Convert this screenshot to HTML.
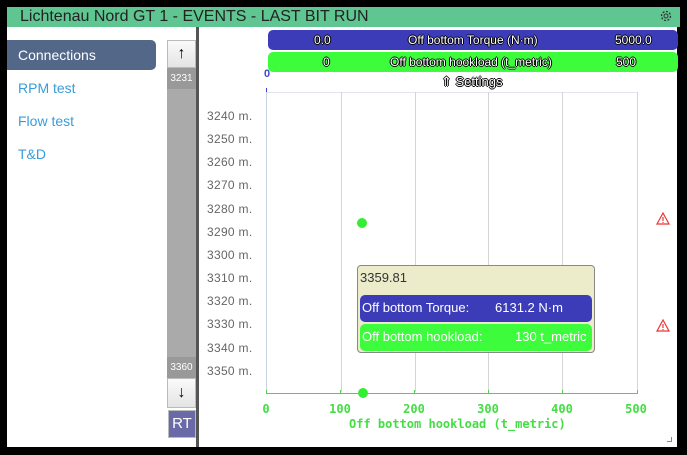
<!DOCTYPE html>
<html><head><style>
*{margin:0;padding:0;box-sizing:border-box}
body{width:687px;height:455px;background:#000;position:relative;overflow:hidden;font-family:"Liberation Sans",sans-serif}
.a{position:absolute}
.lbl{position:absolute;left:207px;font-size:12px;color:#666;letter-spacing:0.3px}
.g{position:absolute;top:92px;width:1px;height:300px;background:#d4d4d4}
.xt{position:absolute;top:402px;font-size:12px;font-weight:bold;color:#44dd44;font-family:"DejaVu Sans Mono",monospace;transform:translateX(-50%)}
.o{text-shadow:1px 0 0 #000,-1px 0 0 #000,0 1px 0 #000,0 -1px 0 #000}
</style></head><body>
<div class="a" style="left:7px;top:7px;width:673px;height:20px;background:#5fc591"></div>
<div class="a" style="left:20px;top:7px;font-size:16px;color:#222;line-height:20px">Lichtenau Nord GT 1 - EVENTS - LAST BIT RUN</div>
<svg class="a" style="left:659px;top:9px" width="14" height="14" viewBox="0 0 14 14"><circle cx="7" cy="7" r="4.5" fill="none" stroke="#333" stroke-width="1.3" stroke-dasharray="2 1.5"/><circle cx="7" cy="7" r="2" fill="none" stroke="#333"/></svg>
<div class="a" style="left:7px;top:27px;width:670px;height:420px;background:#fff"></div>
<div class="a" style="left:7px;top:40px;width:149px;height:30px;background:#536788;border-radius:0 5px 5px 0;color:#fff;font-size:14px;line-height:30px;padding-left:11px">Connections</div>
<div class="a" style="left:18px;top:80px;font-size:14px;color:#3a9dd8">RPM test</div>
<div class="a" style="left:18px;top:113px;font-size:14px;color:#3a9dd8">Flow test</div>
<div class="a" style="left:18px;top:146px;font-size:14px;color:#3a9dd8">T&amp;D</div>
<div class="a" style="left:167px;top:40px;width:29px;height:368px;background:#aaa"></div>
<div class="a" style="left:167px;top:40px;width:29px;height:28px;background:linear-gradient(#fafafa,#e4e4e4);border:1px solid #bbb;text-align:center;font-size:16px;line-height:26px">↑</div>
<div class="a" style="left:167px;top:68px;width:29px;height:21px;background:#999;color:#fff;font-size:10px;text-align:center;line-height:21px">3231</div>
<div class="a" style="left:167px;top:357px;width:29px;height:21px;background:#999;color:#fff;font-size:10px;text-align:center;line-height:21px">3360</div>
<div class="a" style="left:167px;top:378px;width:29px;height:30px;background:linear-gradient(#fafafa,#e4e4e4);border:1px solid #bbb;text-align:center;font-size:16px;line-height:28px">↓</div>
<div class="a" style="left:168px;top:410px;width:28px;height:28px;background:#6a6aa8;border:1px solid #bbb;color:#fff;font-size:15px;text-align:center;line-height:26px">RT</div>
<div class="a" style="left:196px;top:27px;width:3px;height:420px;background:#555"></div>
<div class="a o" style="left:268px;top:30px;width:410px;height:20px;background:#3c3cb8;border-radius:5px;color:#fff;font-size:12px;line-height:20px"><span class="a" style="left:46px">0.0</span><span class="a" style="left:140px">Off bottom Torque (N·m)</span><span class="a" style="left:347px">5000.0</span></div>
<div class="a o" style="left:268px;top:52px;width:410px;height:20px;background:#3cfc3c;border-radius:5px;color:#fff;font-size:12px;line-height:20px"><span class="a" style="left:55px">0</span><span class="a" style="left:122px">Off bottom hookload (t_metric)</span><span class="a" style="left:348px">500</span></div>
<div class="a" style="left:264px;top:68px;font-size:11px;color:#4444cc;font-weight:bold">0</div>
<div class="a o" style="left:441px;top:74px;font-size:13px;color:#fff">⇑ Settings</div>
<div class="a" style="left:266px;top:92px;width:372px;height:1px;background:#e4e4f0"></div>
<div class="a" style="left:266px;top:88px;width:1px;height:5px;background:#4444cc"></div>
<div class="g" style="left:266px;background:#c8d4e4"></div><div class="g" style="left:341px"></div><div class="g" style="left:415px"></div><div class="g" style="left:488px"></div><div class="g" style="left:562px"></div><div class="g" style="left:637px"></div>
<div class="lbl" style="top:109px">3240 m.</div><div class="lbl" style="top:132px">3250 m.</div><div class="lbl" style="top:155px">3260 m.</div><div class="lbl" style="top:178px">3270 m.</div><div class="lbl" style="top:202px">3280 m.</div><div class="lbl" style="top:225px">3290 m.</div><div class="lbl" style="top:248px">3300 m.</div><div class="lbl" style="top:271px">3310 m.</div><div class="lbl" style="top:294px">3320 m.</div><div class="lbl" style="top:317px">3330 m.</div><div class="lbl" style="top:341px">3340 m.</div><div class="lbl" style="top:364px">3350 m.</div>
<div class="a" style="left:266px;top:393px;width:372px;height:1px;background:#55cc55"></div>
<div class="a" style="left:266px;top:390px;width:1px;height:4px;background:#55cc55"></div><div class="a" style="left:340px;top:390px;width:1px;height:4px;background:#55cc55"></div><div class="a" style="left:414px;top:390px;width:1px;height:4px;background:#55cc55"></div><div class="a" style="left:488px;top:390px;width:1px;height:4px;background:#55cc55"></div><div class="a" style="left:562px;top:390px;width:1px;height:4px;background:#55cc55"></div><div class="a" style="left:637px;top:390px;width:1px;height:4px;background:#55cc55"></div>
<div class="xt" style="left:266px">0</div><div class="xt" style="left:340px">100</div><div class="xt" style="left:414px">200</div><div class="xt" style="left:488px">300</div><div class="xt" style="left:562px">400</div><div class="xt" style="left:636px">500</div>
<div class="a" style="left:349px;top:417px;font-size:12px;font-weight:bold;color:#44dd44;font-family:'DejaVu Sans Mono',monospace">Off bottom hookload (t_metric)</div>
<div class="a" style="left:357px;top:218px;width:10px;height:10px;border-radius:50%;background:#33ee33"></div>
<div class="a" style="left:358px;top:388px;width:10px;height:10px;border-radius:50%;background:#33ee33"></div>
<svg class="a" style="left:656px;top:212px" width="14" height="13" viewBox="0 0 14 13"><path d="M7 1 L13 12 L1 12 Z" fill="none" stroke="#ee3333" stroke-width="1.2"/><path d="M7 5 V9 M7 10 V11" stroke="#ee3333" stroke-width="1.2"/></svg>
<svg class="a" style="left:656px;top:319px" width="14" height="13" viewBox="0 0 14 13"><path d="M7 1 L13 12 L1 12 Z" fill="none" stroke="#ee3333" stroke-width="1.2"/><path d="M7 5 V9 M7 10 V11" stroke="#ee3333" stroke-width="1.2"/></svg>
<div class="a" style="left:357px;top:265px;width:238px;height:88px;background:#ececcb;border:1px solid #888;border-radius:4px"></div>
<div class="a" style="left:360px;top:270px;font-size:13px;color:#333">3359.81</div>
<div class="a" style="left:360px;top:295px;width:232px;height:27px;background:#3c3cb8;border-radius:5px;color:#fff;font-size:13px;line-height:26px;padding-left:2px">Off bottom Torque:<span class="a" style="left:135px">6131.2 N·m</span></div>
<div class="a" style="left:360px;top:324px;width:232px;height:27px;background:#3cfc3c;border-radius:5px;color:#fff;font-size:13px;line-height:26px;padding-left:2px;overflow:hidden">Off bottom hookload:<span class="a" style="left:155px">130 t_metric</span></div>
<div class="a" style="left:667px;top:437px;width:5px;height:5px;border-right:1px solid #888;border-bottom:1px solid #888"></div>
</body></html>
